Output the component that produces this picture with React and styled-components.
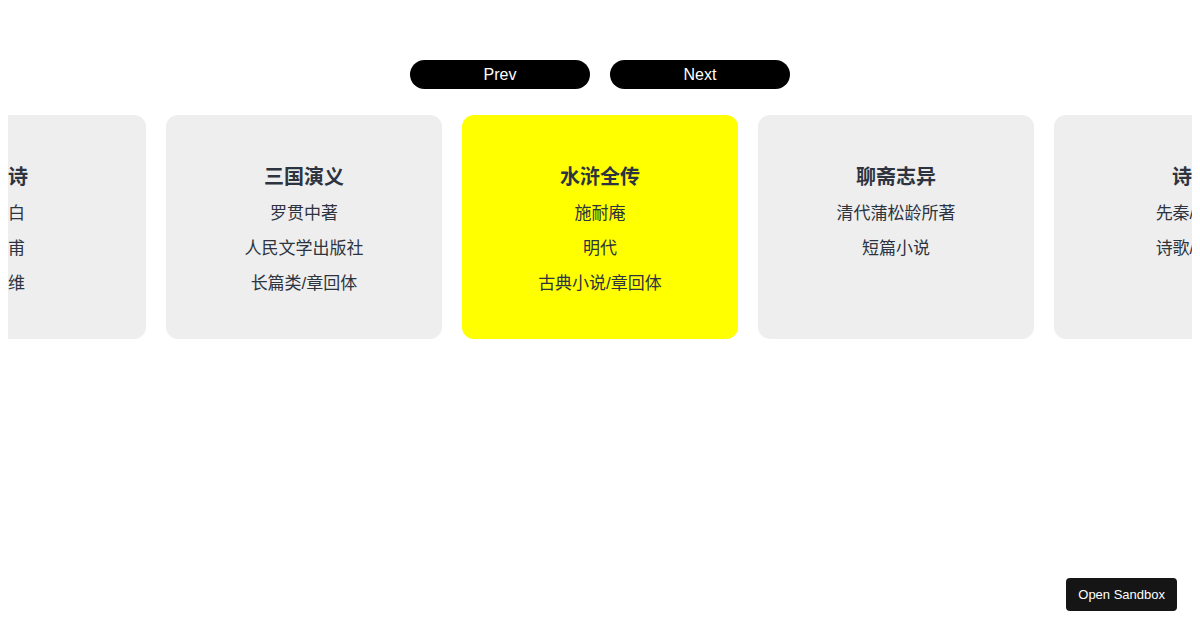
import React, { useState } from 'react'
import styled, { createGlobalStyle } from 'styled-components'

const GlobalStyle = createGlobalStyle`
  body {
    margin: 8px;
    background: #fff;
    font-family: "Liberation Sans", "Noto Sans CJK SC", sans-serif;
  }
`

const books = [
  { title: '唐诗', lines: ['李白', '杜甫', '王维'] },
  { title: '三国演义', lines: ['罗贯中著', '人民文学出版社', '长篇类/章回体'] },
  { title: '水浒全传', lines: ['施耐庵', '明代', '古典小说/章回体'] },
  { title: '聊斋志异', lines: ['清代蒲松龄所著', '短篇小说'] },
  { title: '诗经', lines: ['先秦/周朝', '诗歌/总集'] },
]

function App() {
  const [start, setStart] = useState(0)
  const n = books.length
  const visible = books.map((_, i) => books[(start + i) % n])

  return (
    <>
      <GlobalStyle />
      <Page>
        <Controls>
          <NavButton onClick={() => setStart((start + n - 1) % n)}>Prev</NavButton>
          <NavButton onClick={() => setStart((start + 1) % n)}>Next</NavButton>
        </Controls>
        <Viewport>
          <Track>
            {visible.map((b, i) => (
              <Card key={b.title} $active={i === 2}>
                <Title>{b.title}</Title>
                {b.lines.map(l => (
                  <Line key={l}>{l}</Line>
                ))}
              </Card>
            ))}
          </Track>
        </Viewport>
      </Page>
      <SandboxButton>Open Sandbox</SandboxButton>
    </>
  )
}

export default App

const Page = styled.div`
  padding-top: 52px;
`

const Controls = styled.div`
  display: flex;
  justify-content: center;
  gap: 20px;
  margin-bottom: 26px;
`

const NavButton = styled.button`
  width: 180px;
  height: 29px;
  border: none;
  border-radius: 15px;
  background: #000;
  color: #fff;
  font-family: "Liberation Sans", sans-serif;
  font-size: 16px;
  cursor: pointer;
`

// the track overflows on both sides, the middle card stays centred
const Viewport = styled.div`
  overflow: hidden;
`

const Track = styled.div`
  display: flex;
  justify-content: center;
  gap: 20px;
`

const Card = styled.div`
  flex: 0 0 276px;
  height: 224px;
  box-sizing: border-box;
  padding-top: 43.5px;
  border-radius: 12px;
  background: ${p => (p.$active ? '#ffff00' : '#eeeeee')};
  color: #2d3440;
  text-align: center;
`

const Title = styled.div`
  font-size: 20px;
  font-weight: bold;
  line-height: 37px;
`

const Line = styled.div`
  font-size: 17px;
  line-height: 35px;
`

const SandboxButton = styled.button`
  position: fixed;
  right: 23px;
  bottom: 19px;
  height: 33px;
  padding: 0 12px;
  border: none;
  border-radius: 4px;
  background: #151515;
  color: #fff;
  font-family: "Liberation Sans", sans-serif;
  font-size: 13px;
`
